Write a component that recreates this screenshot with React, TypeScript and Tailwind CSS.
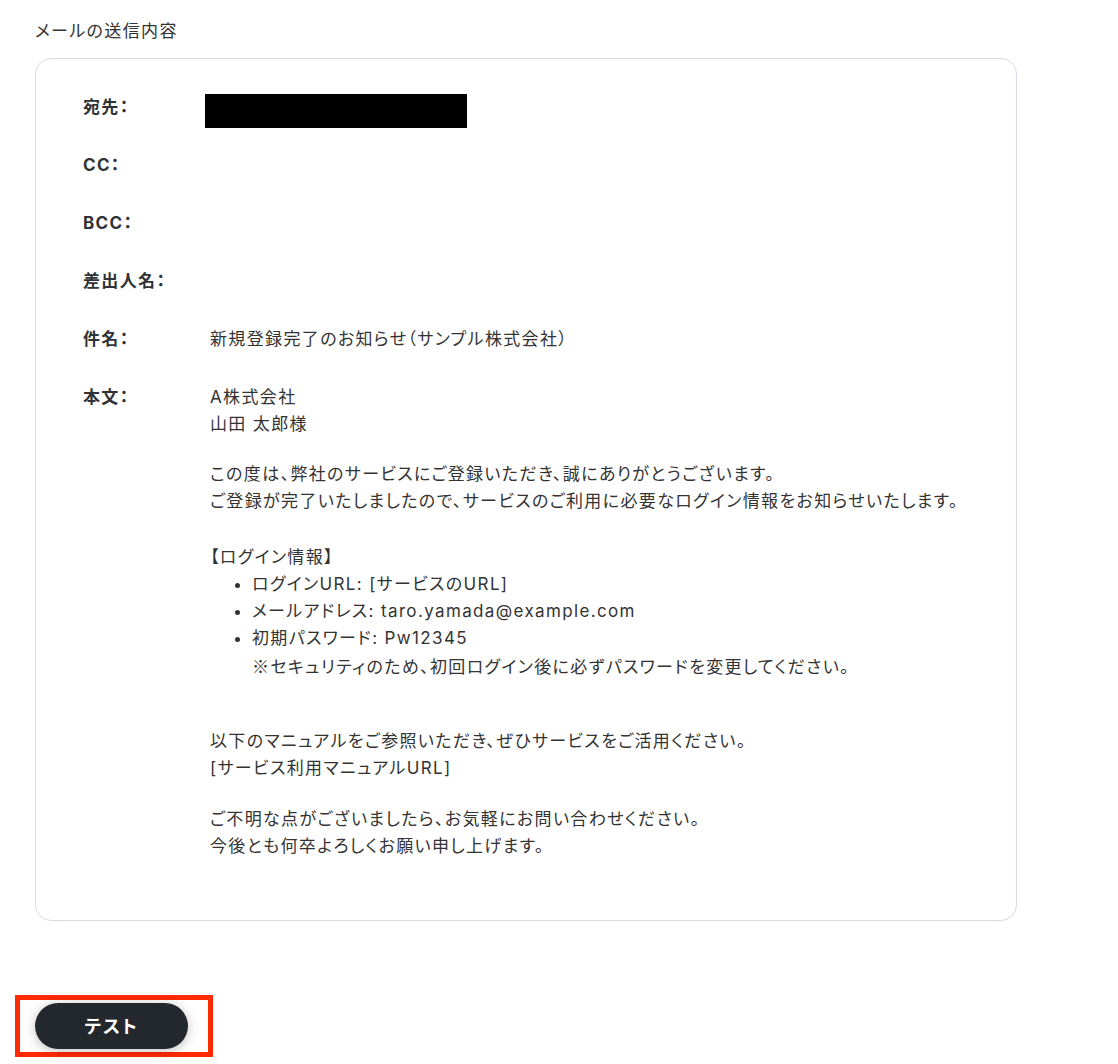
import React from 'react';

const font = { fontFamily: '"Inter", "Noto Sans CJK JP", sans-serif' };

const Row: React.FC<{ label: string; children?: React.ReactNode }> = ({ label, children }) => (
  <div className="flex items-start">
    <div className="w-[122px] shrink-0 font-bold leading-[27px] text-[#2f3337]">{label}</div>
    <div className="flex-1 leading-[27px]">{children}</div>
  </div>
);

export default function App() {
  return (
    <div
      className="min-h-[1064px] w-[1118px] bg-white pl-[35px] pt-[19px] text-[17px] tracking-[0.08em] text-[#333] [font-feature-settings:'palt']"
      style={font}
    >
      <h2 className="leading-[24px] text-[#333]">メールの送信内容</h2>

      <div className="mt-[15px] w-[982px] rounded-[16px] border border-[#d7dbe3] pb-[60px] pl-[47px] pr-[40px] pt-[35px]">
        <div className="flex flex-col gap-[31px]">
          <Row label="宛先：">
            <div className="h-[27px]">
              <div className="h-[34px] w-[262px] bg-black" />
            </div>
          </Row>
          <Row label="CC：" />
          <Row label="BCC：" />
          <Row label="差出人名：" />
          <Row label="件名：">
            <span className="pl-[5px]">新規登録完了のお知らせ（サンプル株式会社）</span>
          </Row>
          <Row label="本文：">
            <div className="pl-[5px]">
              <p>A株式会社</p>
              <p>山田 太郎様</p>
              <p className="mt-[23px]">この度は、弊社のサービスにご登録いただき、誠にありがとうございます。</p>
              <p>ご登録が完了いたしましたので、サービスのご利用に必要なログイン情報をお知らせいたします。</p>
              <p className="mt-[29px]">【ログイン情報】</p>
              <ul className="list-disc pl-[42px]">
                <li>ログインURL: [サービスのURL]</li>
                <li>メールアドレス: taro.yamada@example.com</li>
                <li>初期パスワード: Pw12345</li>
              </ul>
              <p className="pl-[42px]">
                <span style={{ fontFamily: '"Noto Sans CJK JP", sans-serif' }}>※</span>
                セキュリティのため、初回ログイン後に必ずパスワードを変更してください。
              </p>
              <p className="mt-[47px]">以下のマニュアルをご参照いただき、ぜひサービスをご活用ください。</p>
              <p>[サービス利用マニュアルURL]</p>
              <p className="mt-[24px]">ご不明な点がございましたら、お気軽にお問い合わせください。</p>
              <p>今後とも何卒よろしくお願い申し上げます。</p>
            </div>
          </Row>
        </div>
      </div>

      <div className="ml-[-20px] mt-[74px] inline-block border-[5px] border-[#ff2a00] pb-[3px] pl-[15px] pr-[20px] pt-[3px]">
        <button className="h-[46px] w-[153px] rounded-full bg-[#23272e] text-[18px] font-bold tracking-[0.1em] text-white shadow-[0_2px_12px_rgba(0,0,0,0.25)]">
          テスト
        </button>
      </div>
    </div>
  );
}
